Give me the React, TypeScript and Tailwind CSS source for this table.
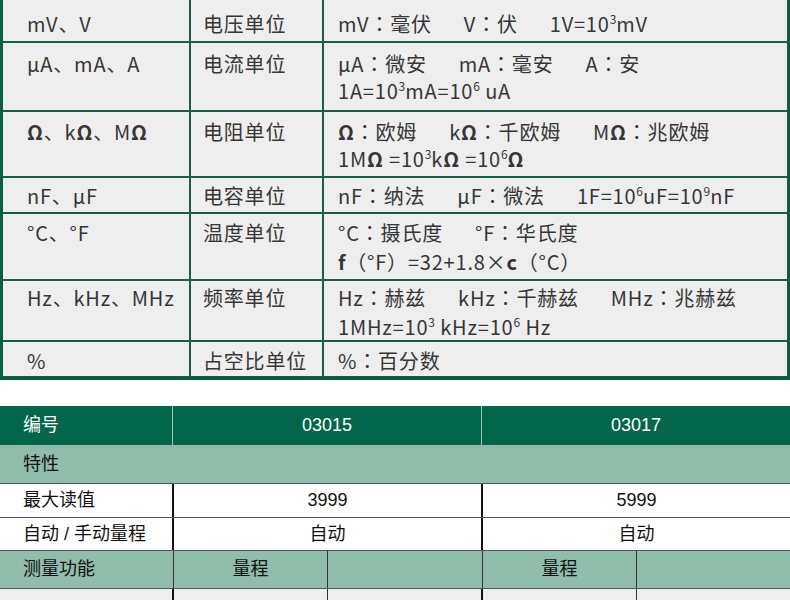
import React from "react";

const G = "border-[#1d5c45]";

function S({ children }: { children: React.ReactNode }) {
  return <sup className="text-[12px] top-[-0.65em] tracking-normal">{children}</sup>;
}
function B({ children }: { children: React.ReactNode }) {
  return <span className="font-bold">{children}</span>;
}
function C() {
  return <span className="font-['Noto_Sans_CJK_JP',sans-serif]">：</span>;
}
function Gap() {
  return <span className="inline-block w-[32px]" />;
}

function Row({
  h,
  pt,
  c1,
  c2,
  c3,
  last,
  lh,
}: {
  h: string;
  pt: string;
  c1: React.ReactNode;
  c2: React.ReactNode;
  c3: React.ReactNode;
  last?: boolean;
  lh?: string;
}) {
  const l = lh ?? "leading-[27px]";
  return (
    <div className={`flex ${h} ${last ? "" : "border-b-2 " + G}`}>
      <div className={`w-[188px] shrink-0 pl-[24px] ${pt} ${l} border-r-2 ${G}`}>{c1}</div>
      <div className={`w-[133px] shrink-0 pl-[12px] ${pt} ${l} border-r-2 ${G}`}>{c2}</div>
      <div className={`flex-1 pl-[14px] ${pt} ${l}`}>{c3}</div>
    </div>
  );
}

export default function App() {
  return (
    <div className="w-[790px] h-[600px] overflow-hidden bg-white">
      <div
        className={`bg-[#eeeeee] border-x-[3px] border-b-[4px] border-[#0c5e42] text-[20px] leading-[27px] tracking-[0.8px] text-[#363636] font-['Noto_Sans_CJK_SC',sans-serif]`}
      >
        <Row
          h="h-[43px]"
          pt="pt-[10px]"
          c1="mV、V"
          c2="电压单位"
          c3={
            <>
              mV<C />毫伏<Gap />V<C />伏<Gap />1V=10<S>3</S>mV
            </>
          }
        />
        <Row
          h="h-[69px]"
          pt="pt-[7px]"
          c1="μA、mA、A"
          c2="电流单位"
          c3={
            <>
              μA<C />微安<Gap />mA<C />毫安<Gap />A<C />安
              <br />
              1A=10<S>3</S>mA=10<S>6</S> uA
            </>
          }
        />
        <Row
          h="h-[66px]"
          pt="pt-[6px]"
          c1={
            <>
              <B>Ω</B>、k<B>Ω</B>、M<B>Ω</B>
            </>
          }
          c2="电阻单位"
          c3={
            <>
              <B>Ω</B>
              <C />欧姆<Gap />k<B>Ω</B>
              <C />千欧姆<Gap />M<B>Ω</B>
              <C />兆欧姆
              <br />
              1M<B>Ω</B> =10<S>3</S>k<B>Ω</B> =10<S>6</S>
              <B>Ω</B>
            </>
          }
        />
        <Row
          h="h-[36px]"
          pt="pt-[4px]"
          c1="nF、μF"
          c2="电容单位"
          c3={
            <>
              nF<C />纳法<Gap />μF<C />微法<Gap />1F=10<S>6</S>uF=10<S>9</S>nF
            </>
          }
        />
        <Row
          h="h-[67px]"
          pt="pt-[4px]"
          lh="leading-[29px]"
          c1="°C、°F"
          c2="温度单位"
          c3={
            <>
              °C<C />摄氏度<Gap />°F<C />华氏度
              <br />
              <B>f</B>（°F）=32+1.8×<B>c</B>（°C）
            </>
          }
        />
        <Row
          h="h-[61px]"
          pt="pt-[2px]"
          lh="leading-[29px]"
          c1="Hz、kHz、MHz"
          c2="频率单位"
          c3={
            <>
              Hz<C />赫兹<Gap />kHz<C />千赫兹<Gap />MHz<C />兆赫兹
              <br />
              1MHz=10<S>3</S> kHz=10<S>6</S> Hz
            </>
          }
        />
        <Row
          h="h-[34px]"
          pt="pt-[5px]"
          last
          c1="%"
          c2="占空比单位"
          c3={
            <>
              %<C />百分数
            </>
          }
        />
      </div>

      <div className="mt-[26px] text-[18px] text-[#111111] font-['Liberation_Sans','Noto_Sans_CJK_SC',sans-serif]">
        <div className="flex h-[39px] bg-[#03664a] text-white">
          <div className="w-[173px] pl-[23px] flex items-center border-r border-[#9fc4b4]">编号</div>
          <div className="w-[309px] flex items-center justify-center border-r border-[#9fc4b4]">03015</div>
          <div className="flex-1 flex items-center justify-center">03017</div>
        </div>
        <div className="flex h-[39px] bg-[#8fbcab] pl-[23px] items-center border-b border-[#555555]">特性</div>
        <div className="flex h-[34px] bg-white border-b border-[#555555]">
          <div className="w-[174px] pl-[23px] flex items-center border-r-2 border-[#111111]">最大读值</div>
          <div className="w-[309px] flex items-center justify-center border-r-2 border-[#111111]">3999</div>
          <div className="flex-1 flex items-center justify-center">5999</div>
        </div>
        <div className="flex h-[33px] bg-white border-b border-[#555555]">
          <div className="w-[174px] pl-[23px] flex items-center border-r-2 border-[#111111]">自动 / 手动量程</div>
          <div className="w-[309px] flex items-center justify-center border-r-2 border-[#111111]">自动</div>
          <div className="flex-1 flex items-center justify-center">自动</div>
        </div>
        <div className="flex h-[38px] bg-[#8fbcab] border-b border-[#555555]">
          <div className="w-[174px] pl-[23px] flex items-center border-r border-[#333333]">测量功能</div>
          <div className="w-[154px] flex items-center justify-center border-r border-[#333333]">量程</div>
          <div className="w-[155px] border-r border-[#333333]" />
          <div className="w-[154px] flex items-center justify-center border-r border-[#333333]">量程</div>
          <div className="flex-1" />
        </div>
        <div className="flex h-[40px] bg-[#eeeeee]">
          <div className="w-[174px] border-r-2 border-[#111111]" />
          <div className="w-[154px] pt-[8px] text-center border-r border-[#333333]">400mV</div>
          <div className="w-[155px] pt-[8px] text-center border-r-2 border-[#111111]">±(0.8%+5)</div>
          <div className="w-[154px] pt-[8px] text-center border-r border-[#333333]">600mV</div>
          <div className="flex-1 pt-[8px] text-center">±(0.8%+5)</div>
        </div>
      </div>
    </div>
  );
}
